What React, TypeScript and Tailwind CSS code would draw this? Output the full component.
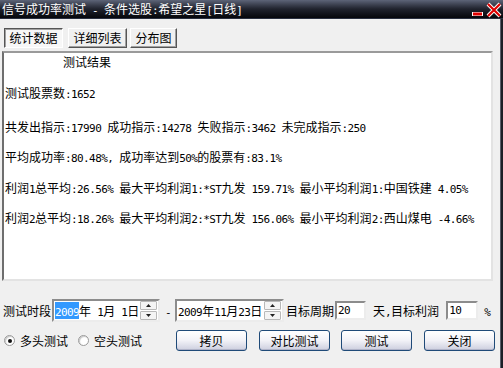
import React from 'react';

// ASCII runs get a narrow mono face so they take half a CJK cell, like the bitmap font
function Mix({ s }: { s: string }) {
  const parts = s.split(/([\x20-\x7e]+)/);
  return (
    <>
      {parts.map((p, i) =>
        /^[\x20-\x7e]+$/.test(p) ? (
          <span key={i} className="font-['DejaVu_Sans_Mono',monospace] text-[11px] tracking-[-0.6px] leading-none">
            {p}
          </span>
        ) : (
          <span key={i}>{p}</span>
        )
      )}
    </>
  );
}

function Tab({ label, active, w }: { label: string; active?: boolean; w: string }) {
  return (
    <div
      className={`${w} h-[20px] flex items-center justify-center border ${
        active
          ? 'bg-[#f7f7f7] border-t-[#555] border-l-[#555] border-b-white border-r-white shadow-[inset_1px_1px_0_#a0a0a0]'
          : 'bg-[#f0f0f0] border-t-white border-l-white border-b-[#555] border-r-[#555] shadow-[inset_-1px_-1px_0_#a0a0a0]'
      }`}
    >
      {label}
    </div>
  );
}

function Spin() {
  return (
    <div className="w-[17px] h-[19px] flex flex-col gap-[1px] mr-[1px] shrink-0">
      <div className="flex-1 flex items-center justify-center bg-[#f4f4f4] border border-[#b8b8b8] rounded-[1px]">
        <svg width="5" height="3" viewBox="0 0 5 3"><path d="M2.5 0 L5 3 L0 3 Z" fill="#222" /></svg>
      </div>
      <div className="flex-1 flex items-center justify-center bg-[#f4f4f4] border border-[#b8b8b8] rounded-[1px]">
        <svg width="5" height="3" viewBox="0 0 5 3"><path d="M0 0 L5 0 L2.5 3 Z" fill="#222" /></svg>
      </div>
    </div>
  );
}

const sunken =
  'border-2 border-t-[#8c8c8c] border-l-[#8c8c8c] border-b-[#ececec] border-r-[#ececec] bg-white';

function Btn({ label }: { label: string }) {
  return (
    <div className="w-[71px] h-[21px] flex items-center justify-center rounded-[3px] border border-[#1f4a78] bg-gradient-to-b from-white via-[#f2f2f7] to-[#cdcfdf] shadow-[inset_0_-1px_0_#b0b3c8]">
      {label}
    </div>
  );
}

function Radio({ checked, label }: { checked?: boolean; label: string }) {
  return (
    <div className="flex items-center">
      <div className="w-[11px] h-[11px] rounded-full border border-[#9a9a9a] bg-white flex items-center justify-center shadow-[inset_1px_1px_1px_#c8c8c8]">
        {checked && <div className="w-[4px] h-[4px] rounded-full bg-[#111]" />}
      </div>
      <span className="ml-[5px]">{label}</span>
    </div>
  );
}

export default function App() {
  const lines = [
    { t: '测试股票数:1652', mt: 'mt-[15px]' },
    { t: '共发出指示:17990 成功指示:14278 失败指示:3462 未完成指示:250', mt: 'mt-[18px]' },
    { t: '平均成功率:80.48%, 成功率达到50%的股票有:83.1%', mt: 'mt-[14px]' },
    { t: '利润1总平均:26.56% 最大平均利润1:*ST九发 159.71% 最小平均利润1:中国铁建 4.05%', mt: 'mt-[15px]' },
    { t: '利润2总平均:18.26% 最大平均利润2:*ST九发 156.06% 最小平均利润2:西山煤电 -4.66%', mt: 'mt-[14px]' },
  ];

  return (
    <div className="w-[503px] h-[368px] flex flex-col overflow-hidden bg-[#f0f0f0] text-black text-[12px] leading-[16px] font-['Noto_Sans_CJK_SC',sans-serif] whitespace-pre">
      {/* title bar */}
      <div className="h-[19px] shrink-0 flex items-center justify-between bg-gradient-to-b from-[#5d6478] via-[#20232e] to-[#06070b] border-b border-[#2a3040]">
        <span className="ml-[2px] text-white">
          <Mix s="信号成功率测试 - 条件选股:希望之星[日线]" />
        </span>
        <svg width="33" height="19" viewBox="0 0 33 19">
          <rect x="2" y="12" width="11" height="4" fill="#fff" />
          <rect x="3" y="12.5" width="9" height="3" fill="#e00000" />
          <path d="M18 4 L30 16 M30 4 L18 16" stroke="#fff" strokeWidth="4" />
          <path d="M18 4 L30 16 M30 4 L18 16" stroke="#e00000" strokeWidth="2.2" />
        </svg>
      </div>

      <div className="flex-1 flex">
        <div className="flex-1 flex flex-col">
          {/* tabs */}
          <div className="flex mt-[9px] ml-[4px]">
            <Tab label="统计数据" active w="w-[59px]" />
            <div className="ml-[5px]"><Tab label="详细列表" w="w-[59px]" /></div>
            <div className="ml-[3px]"><Tab label="分布图" w="w-[47px]" /></div>
          </div>

          {/* result panel */}
          <div className="mt-[3px] ml-[2px] w-[491px] h-[230px] bg-white border-2 border-t-[#9a9a9a] border-l-[#6e6e6e] border-b-[#e3e3e3] border-r-[#e3e3e3] pl-[1px] pt-[1px]">
            <div className="ml-[58px] h-[16px]">测试结果</div>
            {lines.map((l, i) => (
              <div key={i} className={`${l.mt} h-[16px] flex items-center`}>
                <span><Mix s={l.t} /></span>
              </div>
            ))}
          </div>

          {/* period row */}
          <div className="flex items-center mt-[18px] ml-[3px] h-[23px]">
            <span>测试时段</span>
            <div className={`ml-[1px] w-[108px] h-[23px] flex items-center ${sunken}`}>
              <div className="flex-1 pl-[1px]">
                <span className="bg-[#3399ff] text-white"><Mix s="2009" /></span>
                <Mix s="年 1月 1日" />
              </div>
              <Spin />
            </div>
            <span className="ml-[5px] mr-[4px]"><Mix s="-" /></span>
            <div className={`w-[109px] h-[23px] flex items-center ${sunken}`}>
              <div className="flex-1 pl-[1px]">
                <Mix s="2009年11月23日" />
              </div>
              <Spin />
            </div>
            <span className="ml-[2px]">目标周期</span>
            <div className={`ml-[1px] w-[31px] h-[19px] flex items-center pl-[1px] ${sunken}`}>
              <Mix s="20" />
            </div>
            <span className="ml-[7px]"><Mix s="天,目标利润" /></span>
            <div className={`ml-[7px] w-[32px] h-[19px] flex items-center pl-[1px] ${sunken}`}>
              <Mix s="10" />
            </div>
            <span className="ml-[6px]"><Mix s="%" /></span>
          </div>

          {/* action row */}
          <div className="flex items-center mt-[8px] h-[21px]">
            <div className="ml-[4px] flex items-center">
              <Radio checked label="多头测试" />
              <div className="ml-[10px]"><Radio label="空头测试" /></div>
            </div>
            <div className="ml-[34px]"><Btn label="拷贝" /></div>
            <div className="ml-[12px]"><Btn label="对比测试" /></div>
            <div className="ml-[11px]"><Btn label="测试" /></div>
            <div className="ml-[12px]"><Btn label="关闭" /></div>
          </div>
        </div>
        {/* right window frame */}
        <div className="w-[3px] bg-[#1c1e26] border-l border-[#5a5e6a]" />
      </div>
    </div>
  );
}
